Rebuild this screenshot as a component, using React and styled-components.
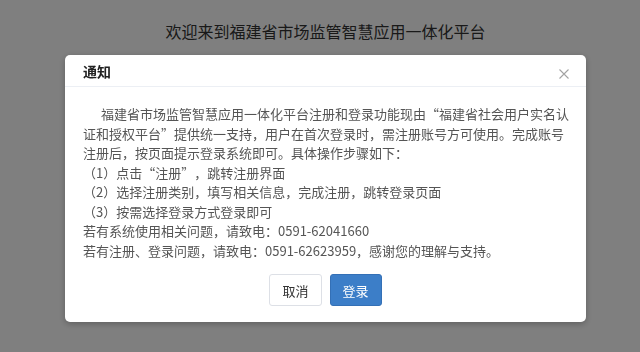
import React from 'react';
import styled, { createGlobalStyle } from 'styled-components';

const GlobalStyle = createGlobalStyle`
  html, body {
    margin: 0;
    padding: 0;
    background: #fff;
  }
  body {
    font-family: "Noto Sans CJK SC", "Noto Sans", sans-serif;
    color: #333;
    text-spacing-trim: space-all;
  }
  * {
    box-sizing: border-box;
  }
`;

const Page = styled.div`
  height: 352px;
  padding-left: 65px;
  overflow: hidden;
`;

const PageTitle = styled.h1`
  width: 521px;
  margin: 0;
  padding-top: 19px;
  font-size: 16px;
  line-height: 24px;
  font-weight: normal;
  text-align: center;
  color: #333;
`;

const Backdrop = styled.div`
  position: fixed;
  inset: 0;
  background: rgba(0, 0, 0, 0.5);
  padding: 55px 0 0 65px;
  display: flex;
  align-items: flex-start;
`;

const Dialog = styled.div`
  width: 521px;
  background: #fff;
  border-radius: 5px;
  box-shadow: 0 2px 6px rgba(0, 0, 0, 0.25);
`;

const DialogHeader = styled.div`
  height: 32px;
  padding: 0 15px 0 18px;
  display: flex;
  align-items: center;
  justify-content: space-between;
  border-bottom: 1px solid #eceff4;
`;

const DialogTitle = styled.h4`
  margin: 0;
  font-size: 14px;
  font-weight: bold;
  line-height: 20px;
  color: #222;
`;

const CloseButton = styled.button`
  border: 0;
  background: none;
  padding: 0;
  width: 14px;
  height: 14px;
  display: flex;
  align-items: center;
  justify-content: center;
  margin-top: 6px;
  cursor: pointer;
`;

const DialogBody = styled.div`
  padding: 17px 18px 0 18px;
  font-size: 13px;
  line-height: 19.5px;
  color: #555;
`;

const Para = styled.p`
  margin: 0;
  text-indent: ${(p) => (p.$indent ? '18px' : '0')};
  white-space: nowrap;
`;

const DialogFooter = styled.div`
  padding: 14px 0 16px;
  display: flex;
  justify-content: center;
  gap: 8px;
`;

const Button = styled.button`
  height: 32px;
  padding: 0 12px;
  font-family: inherit;
  font-size: 13px;
  border-radius: 3px;
  cursor: pointer;
  border: 1px solid ${(p) => (p.$primary ? '#3470b6' : '#dde0e6')};
  background: ${(p) => (p.$primary ? '#3c7ec8' : '#fff')};
  color: ${(p) => (p.$primary ? '#fff' : '#333')};
`;

const CloseIcon = () => (
  <svg width="10" height="10" viewBox="0 0 10 10">
    <path d="M0.5 0.5 L9.5 9.5 M9.5 0.5 L0.5 9.5" stroke="#a3a3a3" strokeWidth="1.1" />
  </svg>
);

const lines = [
  '证和授权平台”提供统一支持，用户在首次登录时，需注册账号方可使用。完成账号',
  '注册后，按页面提示登录系统即可。具体操作步骤如下：',
  '（1）点击“注册”，跳转注册界面',
  '（2）选择注册类别，填写相关信息，完成注册，跳转登录页面',
  '（3）按需选择登录方式登录即可',
  '若有系统使用相关问题，请致电：0591-62041660',
  '若有注册、登录问题，请致电：0591-62623959，感谢您的理解与支持。',
];

export default function App() {
  return (
    <>
      <GlobalStyle />
      <Page>
        <PageTitle>欢迎来到福建省市场监管智慧应用一体化平台</PageTitle>
      </Page>
      <Backdrop>
        <Dialog>
          <DialogHeader>
            <DialogTitle>通知</DialogTitle>
            <CloseButton aria-label="关闭">
              <CloseIcon />
            </CloseButton>
          </DialogHeader>
          <DialogBody>
            <Para $indent>福建省市场监管智慧应用一体化平台注册和登录功能现由“福建省社会用户实名认</Para>
            {lines.map((line, i) => (
              <Para key={i}>{line}</Para>
            ))}
          </DialogBody>
          <DialogFooter>
            <Button>取消</Button>
            <Button $primary>登录</Button>
          </DialogFooter>
        </Dialog>
      </Backdrop>
    </>
  );
}
